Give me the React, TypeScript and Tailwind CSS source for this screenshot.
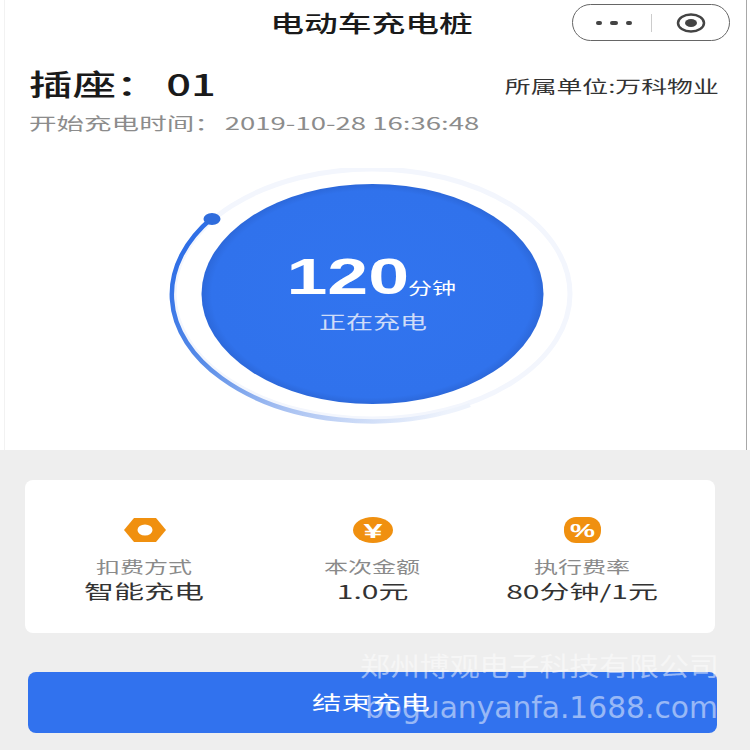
const cjk = "font-['Noto_Sans_CJK_SC','Noto_Sans',sans-serif]"

function Stretch({ className, children }: { className: string; children: React.ReactNode }) {
  return <span className={`inline-block whitespace-nowrap ${className}`}>{children}</span>
}

function Dial() {
  return (
    <svg className="absolute inset-0" width="750" height="282" viewBox="0 168 750 282">
      <defs>
        <linearGradient id="arc" gradientUnits="userSpaceOnUse" x1="212" y1="218" x2="440" y2="421">
          <stop offset="0" stopColor="#2f6fe6" />
          <stop offset="0.3" stopColor="#5a8de8" />
          <stop offset="0.6" stopColor="#a9c2f2" />
          <stop offset="1" stopColor="#eef3fc" />
        </linearGradient>
        <radialGradient id="disc" cx="0.5" cy="0.5" r="0.5">
          <stop offset="0" stopColor="#3174ef" />
          <stop offset="0.94" stopColor="#3072ec" />
          <stop offset="1" stopColor="#2c68da" />
        </radialGradient>
      </defs>
      <ellipse cx="372" cy="294" rx="198" ry="125" fill="none" stroke="#f3f6fd" strokeWidth="5" />
      <path d="M212 218 A200 127 0 0 0 470 405" fill="none" stroke="url(#arc)" strokeWidth="4.5" />
      <ellipse cx="212" cy="219" rx="8.5" ry="6" fill="#2f6cdc" />
      <ellipse cx="372.5" cy="294" rx="171" ry="110" fill="url(#disc)" />
    </svg>
  )
}

function HexIcon() {
  return (
    <svg width="44" height="24" viewBox="0 0 44 24">
      <path d="M11 0 H33 L43 12 L33 24 H11 L1 12 Z" fill="#f0900f" />
      <ellipse cx="22" cy="12" rx="7.5" ry="5.5" fill="#fff" />
    </svg>
  )
}

function YenIcon() {
  return (
    <svg width="40" height="26" viewBox="0 0 40 26">
      <ellipse cx="20" cy="13" rx="20" ry="13" fill="#f0900f" />
      <text x="20" y="20.5" textAnchor="middle" fontSize="21" fontWeight="700" fill="#fff" fontFamily="Liberation Sans" textLength="19" lengthAdjust="spacingAndGlyphs">¥</text>
    </svg>
  )
}

function PercentIcon() {
  return (
    <svg width="37" height="26" viewBox="0 0 37 26">
      <rect width="37" height="26" rx="12" fill="#f0900f" />
      <text x="18.5" y="19.5" textAnchor="middle" fontSize="18" fontWeight="700" fill="#fff" fontFamily="Liberation Sans" textLength="25" lengthAdjust="spacingAndGlyphs">%</text>
    </svg>
  )
}

function Stat({ width, icon, label, value }: { width: string; icon: React.ReactNode; label: string; value: string }) {
  return (
    <div className={`flex flex-col items-center ${width}`}>
      <div className="flex h-[26px] items-center">{icon}</div>
      <Stretch className="mt-[12px] h-[22px] origin-center scale-x-[1.5] text-[16px] leading-[22px] text-[#8a8a8a]">{label}</Stretch>
      <Stretch className="mt-[1px] h-[26px] origin-center scale-x-[1.58] text-[19px] leading-[26px] text-[#333]">{value}</Stretch>
    </div>
  )
}

export default function App() {
  return (
    <div className={`relative h-[750px] w-[750px] overflow-hidden bg-[#eeeeee] ${cjk}`}>
      <div className="h-[450px] bg-white">
        <div className="ml-[4px] h-[450px] w-[743px] border-x border-l-[#f2f2f2] border-r-[#a8a8a8]">
          <div className="relative flex h-[44px] items-center justify-center pr-[8px]">
            <Stretch className="origin-center scale-x-[1.5] text-[22.5px] font-medium leading-[44px] text-[#1a1a1a]">电动车充电桩</Stretch>
            <div className="absolute right-[16px] top-[4px] flex h-[37px] w-[158px] items-center rounded-full border border-[#666]">
              <div className="flex w-[78px] items-center justify-center gap-[8px] pl-[4px]">
                <span className="h-[4px] w-[6px] rounded-full bg-[#444]" />
                <span className="h-[4px] w-[8px] rounded-full bg-[#444]" />
                <span className="h-[4px] w-[6px] rounded-full bg-[#444]" />
              </div>
              <div className="h-[18px] w-px bg-[#ccc]" />
              <div className="flex flex-1 justify-center">
                <svg width="30" height="20" viewBox="0 0 30 20">
                  <ellipse cx="15" cy="10" rx="13" ry="8.5" fill="none" stroke="#444" strokeWidth="2.5" />
                  <ellipse cx="15" cy="10" rx="6" ry="4" fill="#444" />
                </svg>
              </div>
            </div>
          </div>
          <div className="flex h-[65px] items-start justify-between pl-[24px] pr-[27px] pt-[13px]">
            <Stretch className="origin-left scale-x-[1.5] text-[29px] font-medium leading-[52px] text-[#1a1a1a] [word-spacing:-2px]">插座： 01</Stretch>
            <Stretch className="mt-[3px] origin-right scale-x-[1.52] text-[17px] leading-[52px] text-[#333]">所属单位:万科物业</Stretch>
          </div>
          <div className="pl-[24px] pt-[2px]">
            <Stretch className="origin-left scale-x-[1.62] text-[17px] leading-[24px] text-[#8c8c8c]">
              <span className="[word-spacing:-2px]">开始充电时间： </span>2019-10-28 16:36:48
            </Stretch>
          </div>
        </div>
      </div>

      <div className="absolute left-0 top-[168px] h-[282px] w-[750px]">
        <Dial />
        <div className="absolute left-0 top-[84px] flex w-[750px] flex-col items-center">
          <div className="pr-[55px]">
            <Stretch className="origin-center scale-x-[1.47] font-['Liberation_Sans',sans-serif] text-[50px] font-bold leading-[50px] text-white">120</Stretch>
          </div>
          <Stretch className="mr-[5px] mt-[7px] origin-center scale-x-[1.5] text-[18px] leading-[24px] text-[#cfdcf8]">正在充电</Stretch>
        </div>
        <div className="absolute left-[408px] top-[107px]">
          <Stretch className="origin-left scale-x-[1.5] text-[16px] leading-[24px] text-white">分钟</Stretch>
        </div>
      </div>

      <div className="mx-[25px] mt-[30px] flex h-[153px] w-[690px] rounded-[8px] bg-white pt-[37px]">
        <Stat width="w-[239px]" icon={<HexIcon />} label="扣费方式" value="智能充电" />
        <Stat width="w-[217px]" icon={<YenIcon />} label="本次金额" value="1.0元" />
        <Stat width="w-[202px]" icon={<PercentIcon />} label="执行费率" value="80分钟/1元" />
      </div>

      <div className="ml-[28px] mt-[39px] flex h-[61px] w-[689px] items-center justify-center rounded-[8px] bg-[#3172ee] pb-[2px] pr-[2px]">
        <Stretch className="origin-center scale-x-[1.55] text-[19px] leading-[26px] text-white">结束充电</Stretch>
      </div>

      <div className="absolute left-[360px] top-[648px] w-[358px] text-white/50">
        <Stretch className="origin-left scale-x-[1.15] text-[26px] leading-[34px]">郑州博观电子科技有限公司</Stretch>
        <Stretch className="mt-[7px] block origin-left scale-x-[0.99] pl-[5px] font-['DejaVu_Sans',sans-serif] text-[30px] leading-[38px]">boguanyanfa.1688.com</Stretch>
      </div>
    </div>
  )
}
